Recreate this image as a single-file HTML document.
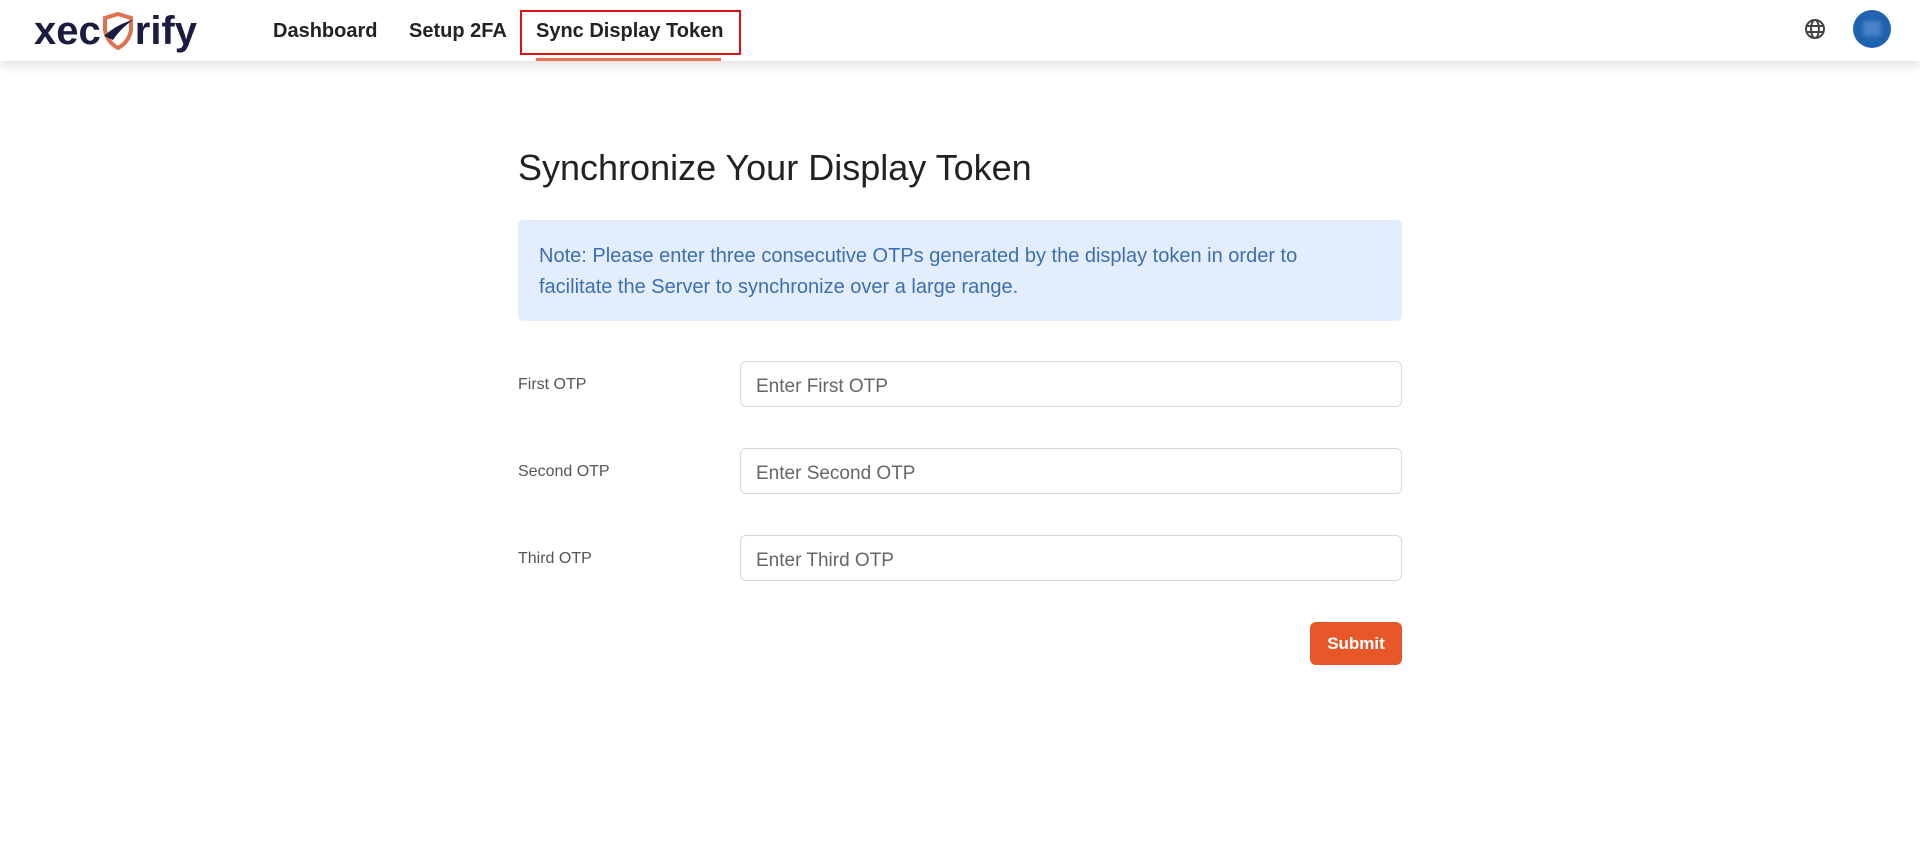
<!DOCTYPE html>
<html><head><meta charset="utf-8"><style>
*{box-sizing:border-box;margin:0;padding:0}
body{width:1920px;height:846px;background:#fff;font-family:"Liberation Sans",sans-serif;position:relative;overflow:hidden}
.hdr{position:absolute;left:0;top:0;width:1920px;height:61px;background:#fff;box-shadow:0 4px 12px rgba(0,0,0,.13)}
.logo{position:absolute;left:34px;top:9px;font-size:40px;font-weight:bold;color:#1b1d40;letter-spacing:0px}
.nav{position:absolute;top:20px;font-size:20px;color:#222;font-weight:600}
.box{position:absolute;left:520px;top:10px;width:221px;height:45px;border:2px solid #d11;}
.ul{position:absolute;left:536px;top:58px;width:185px;height:3px;background:#e8724f}
h1{position:absolute;left:518px;top:147px;font-size:36px;font-weight:normal;color:#222}
.note{position:absolute;left:518px;top:220px;width:884px;height:101px;background:#e3edfb;border-radius:5px;color:#3a6fb5;font-size:20px;line-height:31px;padding:21px 60px 21px 21px}
.lbl{position:absolute;left:518px;font-size:16px;color:#555}
.inp{position:absolute;left:740px;width:662px;height:46px;border:1px solid #d8d8d8;border-radius:6px;font-size:19px;color:#666;padding:14px 15px 0}
.btn{position:absolute;left:1310px;top:622px;width:92px;height:43px;background:#e8572a;border-radius:6px;color:#fff;font-weight:bold;font-size:17px;text-align:center;line-height:43px}
</style></head><body>
<div class="hdr">
<div class="logo">xec<svg width="34" height="38" viewBox="0 0 34 38" style="vertical-align:-6px"><path d="M4 6 L17 2 L30 6 L30 18 Q28 30 17 36 Q6 30 4 18 Z" fill="none" stroke="#e07050" stroke-width="4"/><path d="M3 24 Q16 12 32 8 Q20 16 12 28 Z" fill="#1b1d40"/></svg>rify</div>
<div class="nav" style="left:273px">Dashboard</div>
<div class="nav" style="left:409px">Setup 2FA</div>
<div class="nav" style="left:536px">Sync Display Token</div>
<div class="box"></div><div class="ul"></div>
<svg style="position:absolute;left:1804px;top:18px" width="22" height="22" viewBox="0 0 22 22" fill="none" stroke="#444" stroke-width="2"><circle cx="11" cy="11" r="9"/><ellipse cx="11" cy="11" rx="4" ry="9"/><path d="M2 8h18M2 14h18"/></svg>
<div style="position:absolute;left:1853px;top:10px;width:38px;height:38px;border-radius:50%;background:#1e62b0"><div style="position:absolute;left:10px;top:11px;width:18px;height:15px;background:#4a82c6;filter:blur(2px)"></div></div>
</div>
<h1>Synchronize Your Display Token</h1>
<div class="note">Note: Please enter three consecutive OTPs generated by the display token in order to facilitate the Server to synchronize over a large range.</div>
<div class="lbl" style="top:376px">First OTP</div>
<div class="inp" style="top:361px">Enter First OTP</div>
<div class="lbl" style="top:463px">Second OTP</div>
<div class="inp" style="top:448px">Enter Second OTP</div>
<div class="lbl" style="top:550px">Third OTP</div>
<div class="inp" style="top:535px">Enter Third OTP</div>
<div class="btn">Submit</div>
</body></html>
